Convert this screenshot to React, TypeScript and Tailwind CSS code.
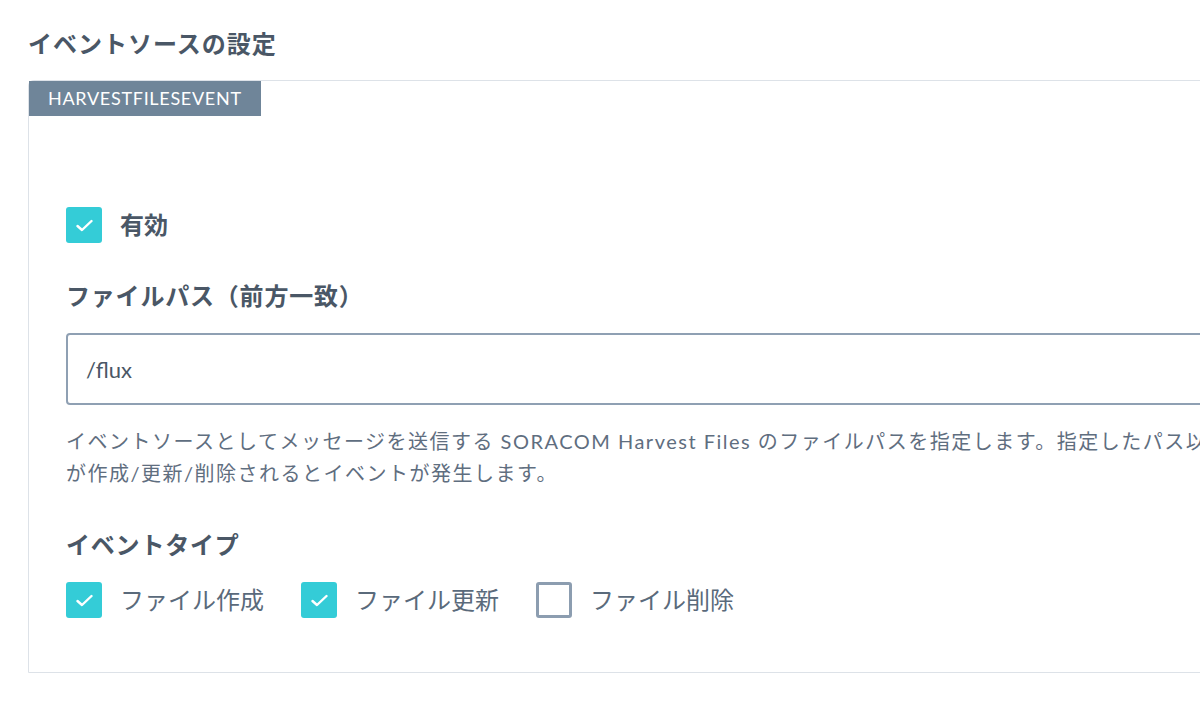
import React from "react"

const font = { fontFamily: 'Lato, "Noto Sans CJK JP", sans-serif' }

function Check({ checked }: { checked: boolean }) {
  if (!checked) {
    return <span className="block h-9 w-9 shrink-0 rounded-[3px] border-[3px] border-[#8c9db0] bg-white" />
  }
  return (
    <span className="flex h-9 w-9 shrink-0 items-center justify-center rounded-[3px] bg-[#34ccd7]">
      <svg width="17" height="13" viewBox="0 0 17 13" fill="none">
        <polyline points="1.5,7 6,11 15.5,2" stroke="white" strokeWidth="2.4" strokeLinecap="round" strokeLinejoin="round" />
      </svg>
    </span>
  )
}

function Option({ label, checked }: { label: string; checked: boolean }) {
  return (
    <label className="flex items-center gap-[18px]">
      <Check checked={checked} />
      <span className="text-[24px] text-[#5a6a7b]">{label}</span>
    </label>
  )
}

export default function App() {
  return (
    <div className="h-[706px] w-[1200px] overflow-hidden bg-white pl-7 pt-7" style={font}>
      <h2 className="text-[24px] font-bold leading-8 tracking-[1px] text-[#4a5766]">イベントソースの設定</h2>

      <section className="mt-5 w-[1400px] rounded-tl-md border border-[#dde2e8] pb-[54px]">
        <div className="inline-block bg-[#6f8599] px-[19px] py-[5px] text-[18px] leading-[25px] tracking-[0.7px] text-white">
          HARVESTFILESEVENT
        </div>

        <div className="pl-[37px]">
          <div className="mt-[91px] flex items-center gap-[18px]">
            <Check checked />
            <span className="text-[24px] font-bold text-[#4a5766]">有効</span>
          </div>

          <h3 className="mt-[37px] text-[24px] font-bold leading-8 tracking-[0.8px] text-[#4a5766]">ファイルパス（前方一致）</h3>

          <div className="mt-[21px] flex h-[72px] items-center rounded-[4px] border-2 border-[#8fa0b3] px-[18px] text-[22px] text-[#4a5766]">
            /flux
          </div>

          <p className="mt-5 text-[20px] leading-8 tracking-[1.5px] text-[#5f6e7f]">
            イベントソースとしてメッセージを送信する SORACOM Harvest Files のファイルパスを指定します。指定したパス以下のファイル
            <br />
            が作成/更新/削除されるとイベントが発生します。
          </p>

          <h3 className="mt-[40px] text-[24px] font-bold leading-8 tracking-[0.8px] text-[#4a5766]">イベントタイプ</h3>

          <div className="mt-[21px] flex items-center gap-[37px]">
            <Option label="ファイル作成" checked />
            <Option label="ファイル更新" checked />
            <Option label="ファイル削除" checked={false} />
          </div>
        </div>
      </section>
    </div>
  )
}
